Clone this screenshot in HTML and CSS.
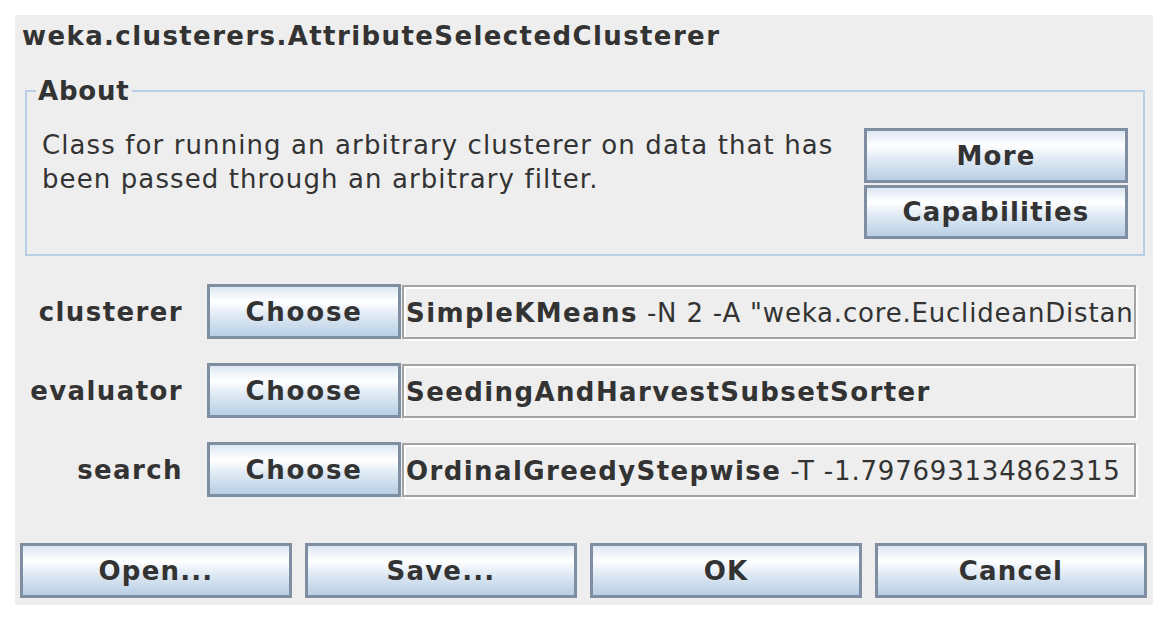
FILE: index.html
```html
<!DOCTYPE html>
<html>
<head>
<meta charset="utf-8">
<link rel="stylesheet" href="styles.css">
</head>
<body>
<div class="panel">
  <div class="title">weka.clusterers.AttributeSelectedClusterer</div>
  <fieldset class="about">
    <legend class="about-legend">About</legend>
    <div class="about-body">
      <div class="about-text">Class for running an arbitrary clusterer on data that has<br>been passed through an arbitrary filter.</div>
      <div class="about-buttons">
        <button class="btn btn-more">More</button>
        <button class="btn btn-cap">Capabilities</button>
      </div>
    </div>
  </fieldset>
  <div class="props">
    <div class="prop-label">clusterer</div>
    <button class="btn btn-choose">Choose</button>
    <div class="prop-field"><b>SimpleKMeans</b> -N 2 -A "weka.core.EuclideanDistan</div>

    <div class="prop-label">evaluator</div>
    <button class="btn btn-choose">Choose</button>
    <div class="prop-field"><b>SeedingAndHarvestSubsetSorter</b></div>

    <div class="prop-label">search</div>
    <button class="btn btn-choose">Choose</button>
    <div class="prop-field"><b>OrdinalGreedyStepwise</b> -T -1.797693134862315</div>
  </div>
  <div class="actions">
    <button class="btn btn-action">Open...</button>
    <button class="btn btn-action">Save...</button>
    <button class="btn btn-action">OK</button>
    <button class="btn btn-action">Cancel</button>
  </div>
</div>
</body>
</html>
```
FILE: styles.css
```css
html, body {
  margin: 0;
  padding: 0;
  background: #ffffff;
}
body {
  font-family: "DejaVu Sans", "Liberation Sans", sans-serif;
  color: #333333;
}
.panel {
  margin: 15px 0 0 15px;
  width: 1138px;
  height: 590px;
  box-sizing: border-box;
  background: #eeeeee;
  padding: 6px 0 0 0;
}
.title {
  font-size: 26px;
  font-weight: bold;
  letter-spacing: 1.4px;
  line-height: 30px;
  padding-left: 7px;
  height: 30px;
}
.about {
  margin: 25px 0 0 10px;
  width: 1120px;
  box-sizing: border-box;
  border: 2px solid #b8cfe5;
  padding: 22px 15px 15px 15px;
  min-width: 0;
}
.about-legend {
  font-size: 26px;
  font-weight: bold;
  letter-spacing: 0.8px;
  line-height: 30px;
  padding: 0 2px;
  margin-left: -6px;
}
.about-body {
  display: flex;
  justify-content: space-between;
  align-items: flex-start;
}
.about-text {
  font-size: 26px;
  letter-spacing: 1.1px;
  line-height: 34px;
}
.about-buttons {
  display: flex;
  flex-direction: column;
  gap: 2px;
  width: 264px;
}
.btn {
  font-family: "DejaVu Sans", "Liberation Sans", sans-serif;
  font-size: 26px;
  font-weight: bold;
  letter-spacing: 1.2px;
  color: #333333;
  border: 3px solid #7f8fa1;
  background: linear-gradient(to bottom, #dde8f3 0%, #ffffff 30%, #dde8f3 60%, #b8cfe5 100%);
  padding: 0;
  margin: 0;
  box-sizing: border-box;
  text-align: center;
}
.btn-more {
  height: 55px;
}
.btn-cap {
  height: 54px;
}
.props {
  margin: 28px 0 0 0;
  display: grid;
  grid-template-columns: 192px 194px 735px;
  row-gap: 24px;
  align-items: center;
}
.prop-label {
  font-size: 26px;
  font-weight: bold;
  letter-spacing: 1.4px;
  text-align: right;
  margin-right: 24px;
}
.btn-choose {
  height: 55px;
  width: 194px;
  letter-spacing: 1.8px;
}
.prop-field {
  height: 54px;
  box-sizing: border-box;
  margin-left: 1px;
  border: 2px solid #a3a3a3;
  box-shadow: inset 2px 2px 0 #ffffff, 2px 2px 0 #ffffff;
  font-size: 26px;
  letter-spacing: 0.8px;
  line-height: 52px;
  padding-left: 2px;
  white-space: nowrap;
  overflow: hidden;
}
.prop-field b {
  font-weight: bold;
  letter-spacing: 1.4px;
}
.actions {
  margin: 46px 0 0 5px;
  display: flex;
  gap: 13px;
}
.btn-action {
  width: 272px;
  height: 55px;
}
```
